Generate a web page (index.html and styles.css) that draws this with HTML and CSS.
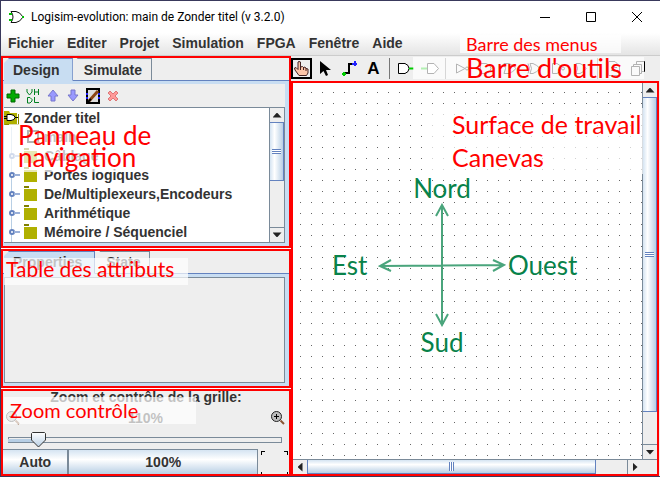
FILE: index.html
```html
<!DOCTYPE html>
<html lang="fr">
<head>
<meta charset="utf-8">
<meta name="viewport" content="width=device-width, initial-scale=1">
<title>Logisim-evolution: main de Zonder titel (v 3.2.0)</title>
<link rel="stylesheet" href="styles.css">
</head>
<body>
<div class="window">
  <header class="titlebar">
    <svg class="app-icon" width="16" height="14" viewBox="0 0 16 14"><path d="M2 1.500H7Q11 2 14 7Q11 12 7 12.500H2Q6 7 2 1.500Z" fill="#fff" stroke="#111"/><path d="M0 4h3M0 10h3M13 7h2" stroke="#0b0" stroke-width="2"/></svg>
    <h1 class="title">Logisim-evolution: main de Zonder titel (v 3.2.0)</h1>
    <div class="window-buttons">
      <button aria-label="Réduire"><svg width="12" height="12" viewBox="0 0 12 12"><path d="M1 6.500H11" stroke="#000"/></svg></button>
      <button aria-label="Agrandir"><svg width="12" height="12" viewBox="0 0 12 12"><path d="M1.500 1.500H10.500V10.500H1.500Z" stroke="#000" fill="none"/></svg></button>
      <button aria-label="Fermer"><svg width="12" height="12" viewBox="0 0 12 12"><path d="M1 1L11 11M11 1L1 11" stroke="#000"/></svg></button>
    </div>
  </header>
  <nav class="menubar">
    <button>Fichier</button><button>Editer</button><button>Projet</button><button>Simulation</button><button>FPGA</button><button>Fenêtre</button><button>Aide</button>
    <span class="note note-menus">Barre des menus</span>
  </nav>
  <main class="workspace">
    <div class="side">
      <section class="frame explorer">
        <div class="tabs"><button class="tab active">Design</button><button class="tab">Simulate</button></div>
        <div class="tab-body">
          <div class="tree-tools">
            <button aria-label="Ajouter"><svg width="14" height="14" viewBox="0 0 14 14"><path d="M5 1h4v4h4v4H9v4H5V9H1V5h4Z" fill="#0a0" stroke="#060"/></svg></button>
            <button aria-label="VHDL"><svg width="14" height="16" viewBox="0 0 14 16"><path d="M1 1V4L3.500 7L6 4V1M8.500 1V7M12.500 1V7M8.500 4H12.500M1.500 9.500H4L6 11.500V13L4 15H1.500ZM8.500 9V14.500H13" fill="none" stroke="#008020"/></svg></button>
            <button aria-label="Monter"><svg width="12" height="14" viewBox="0 0 12 14"><path d="M6 1L11 7H8V12H4V7H1Z" fill="#99f" stroke="#77c"/></svg></button>
            <button aria-label="Descendre"><svg width="12" height="14" viewBox="0 0 12 14"><path d="M6 12L11 6H8V1H4V6H1Z" fill="#99f" stroke="#77c"/></svg></button>
            <button aria-label="Apparence"><svg width="14" height="16" viewBox="0 0 14 16"><path d="M1 1H13V15H1Z" fill="#ddd" stroke="#000" stroke-width="2"/><path d="M3 13L12 3" stroke="#8b4513" stroke-width="3"/><path d="M2 14L5 11" stroke="#000" stroke-width="2"/><path d="M1 5v2M1 9v2M13 5v2M13 9v2" stroke="#22f" stroke-width="2"/></svg></button>
            <button aria-label="Supprimer"><svg width="12" height="12" viewBox="0 0 12 12"><path d="M3 1L6 4L9 1L11 3L8 6L11 9L9 11L6 8L3 11L1 9L4 6L1 3Z" fill="#f99" stroke="#d77"/></svg></button>
          </div>
          <div class="tree-pane">
            <ul class="tree">
              <li class="root"><svg width="18" height="16" viewBox="0 0 18 16"><path d="M0 1H5L6 3H13V15H0Z" fill="#b0b000"/><path d="M14.500 4V14M1 14.500H15" stroke="#880"/><path d="M3 4.500H7Q11 5 11 7.500Q11 10 7 10.500H3Z" fill="#fff" stroke="#000"/><path d="M0 6.500H3M0 8.500H3M11 7.500H14" stroke="#000"/></svg>Zonder titel</li>
              <li class="leaf"><svg width="16" height="16" viewBox="0 0 16 16"><path d="M2 2H12V13H2Z" fill="#fff" stroke="#000" stroke-width="2"/><path d="M9 11L15 15" stroke="#853" stroke-width="2"/></svg>main</li>
              <li><i class="knob"></i><i class="folder"></i>Câblage</li>
              <li><i class="knob"></i><i class="folder"></i>Portes logiques</li>
              <li><i class="knob"></i><i class="folder"></i>De/Multiplexeurs,Encodeurs</li>
              <li><i class="knob"></i><i class="folder"></i>Arithmétique</li>
              <li><i class="knob"></i><i class="folder"></i>Mémoire / Séquenciel</li>
              <li><i class="folder"></i></li>
            </ul>
            <div class="scroll vertical tree-scroll">
              <button aria-label="Haut"><i class="arrow up"></i></button>
              <div class="thumb"><i class="grip"></i></div>
              <div class="track"></div>
              <button aria-label="Bas"><i class="arrow down"></i></button>
            </div>
          </div>
        </div>
        <span class="note note-explorer">Panneau de<br>navigation</span>
      </section>
      <section class="frame attributes">
        <div class="tabs"><button class="tab active">Properties</button><button class="tab">State</button></div>
        <div class="tab-body"><div class="attribute-table"></div></div>
        <span class="note note-attributes">Table des attributs</span>
      </section>
      <section class="frame zoom">
        <label class="zoom-title" for="zoom">Zoom et contrôle de la grille:</label>
        <div class="zoom-row">
          <svg width="16" height="16" viewBox="0 0 16 16"><circle cx="6.500" cy="6.500" r="5" fill="#bbb" stroke="#222"/><path d="M4 6.500H9" stroke="#000"/><path d="M10.500 10.500L14 14" stroke="#853" stroke-width="2"/></svg>
          <output>110%</output>
          <svg width="16" height="16" viewBox="0 0 16 16"><circle cx="6.500" cy="6.500" r="5" fill="#bbb" stroke="#222"/><path d="M4 6.500H9M6.500 4V9" stroke="#000"/><path d="M10.500 10.500L14 14" stroke="#853" stroke-width="2"/></svg>
        </div>
        <input class="slider" id="zoom" type="range" min="0" max="100" value="9">
        <div class="zoom-buttons">
          <button class="metal auto">Auto</button><button class="metal full">100%</button>
          <button class="grid-toggle" aria-label="Grille"><i></i><i></i></button>
        </div>
        <span class="note note-zoom">Zoom contrôle</span>
      </section>
    </div>
    <div class="editor">
      <div class="toolbar">
        <button class="selected" aria-label="Pousser"><svg width="17" height="17" viewBox="0 0 17 17"><path d="M6 15.500L2 10L1.500 8L3 7.500L5 9.500V2L6 1.500L7.500 2V7L9.500 6.500L10.500 7.500L12 7L13 8.500L15 9V13L13.500 15.500Z" fill="#fcc5a8" stroke="#422"/><path d="M7.500 7V10M10.500 7V10M13 8V11" stroke="#422"/></svg></button>
        <button aria-label="Sélection"><svg width="13" height="17" viewBox="0 0 13 17"><path d="M1 1V14L4.500 11L7 16L9 15L7 10H12Z" fill="#000"/></svg></button>
        <button aria-label="Câble"><svg width="17" height="17" viewBox="0 0 17 17"><path d="M3 13H8V4H13" fill="none" stroke="#000" stroke-width="2"/><path d="M1 14H5M3 12V16" stroke="#0c0" stroke-width="2"/><path d="M11 4H16M14 1V6" stroke="#22f" stroke-width="2"/></svg></button>
        <button class="letter">A</button>
        <i class="rule"></i>
        <button aria-label="Entrée"><svg width="18" height="13" viewBox="0 0 18 13"><path d="M1.500 1.500H8Q12 3 12 6.500Q12 10 8 11.500H1.500Z" fill="#fff" stroke="#000"/><path d="M12 6.500H17" stroke="#0c0" stroke-width="2"/></svg></button>
        <button aria-label="Sortie"><svg width="20" height="13" viewBox="0 0 20 13"><path d="M7.500 1.500H14L18.500 6.500L14 11.500H7.500Z" fill="#fff" stroke="#000"/><path d="M1 6.500H7" stroke="#0c0" stroke-width="2"/></svg></button>
        <i class="rule"></i>
        <button aria-label="Non"><svg width="14" height="13" viewBox="0 0 14 13"><path d="M1.500 2V11L10 6.500Z" fill="none" stroke="#000"/><circle cx="12" cy="6.500" r="1.500" fill="none" stroke="#000"/></svg></button>
        <button aria-label="Et"><svg width="14" height="13" viewBox="0 0 14 13"><path d="M1.500 1.500H7Q12 3 12 6.500Q12 10 7 11.500H1.500Z" fill="none" stroke="#000"/></svg></button>
        <button aria-label="Ou"><svg width="14" height="13" viewBox="0 0 14 13"><path d="M1 1.500H6Q10 3 13 6.500Q10 10 6 11.500H1Q4 6.500 1 1.500Z" fill="none" stroke="#000"/></svg></button>
        <button aria-label="Ou exclusif"><svg width="14" height="13" viewBox="0 0 14 13"><path d="M3 1.500H6Q10 3 13 6.500Q10 10 6 11.500H3Q6 6.500 3 1.500ZM1 1.500Q4 6.500 1 11.500" fill="none" stroke="#000"/></svg></button>
        <button aria-label="Non-et"><svg width="14" height="13" viewBox="0 0 14 13"><path d="M1.500 1.500H6Q10 3 10 6.500Q10 10 6 11.500H1.500Z" fill="none" stroke="#000"/><circle cx="12" cy="6.500" r="1.500" fill="none" stroke="#000"/></svg></button>
        <button aria-label="Non-ou"><svg width="14" height="13" viewBox="0 0 14 13"><path d="M1 1.500H5Q9 3 11 6.500Q9 10 5 11.500H1Q4 6.500 1 1.500Z" fill="none" stroke="#000"/></svg></button>
        <i class="rule"></i>
        <button aria-label="Registre"><svg width="14" height="17" viewBox="0 0 14 17"><path d="M1.500 1.500H8L12.500 6V15.500H1.500ZM4 7.500H10M4 10.500H10" fill="none" stroke="#000"/></svg></button>
        <button aria-label="Copies"><svg width="16" height="17" viewBox="0 0 16 17"><path d="M1.500 6.500H9.500V15.500H1.500ZM3.500 6V4.500H11.500V13.500H10M6.500 4V1.500H14.500V11.500H12" fill="none" stroke="#000"/></svg></button>
        <span class="note note-toolbar">Barre d'outils</span>
      </div>
      <section class="frame canvas-frame">
        <div class="canvas">
          <div class="compass">
            <span class="north">Nord</span><span class="west">Est</span>
            <svg width="128" height="124" viewBox="0 0 128 124" fill="none" stroke="#4aa57c" stroke-width="2"><path d="M64 2V122M2 63L126 62M58 13L64 2L70 13M58 111L64 122L70 111M13 57L2 63L13 68M115 57L126 62L115 68"/></svg>
            <span class="east">Ouest</span><span class="south">Sud</span>
          </div>
        </div>
        <div class="scroll vertical canvas-y">
          <button aria-label="Haut"><i class="arrow up"></i></button>
          <div class="thumb"><i class="grip"></i></div>
          <div class="track"></div>
          <button aria-label="Bas"><i class="arrow down"></i></button>
        </div>
        <div class="scroll horizontal canvas-x">
          <button aria-label="Gauche"><i class="arrow left"></i></button>
          <div class="thumb"><i class="grip"></i></div>
          <div class="track"></div>
          <button aria-label="Droite"><i class="arrow right"></i></button>
        </div>
        <div class="corner"></div>
        <span class="note note-canvas">Surface de travail<br>Canevas</span>
      </section>
    </div>
  </main>
</div>
</body>
</html>
```
FILE: styles.css
```css
* { box-sizing: border-box; }
body { margin: 0; background: #2b2b4a; font: bold 14px/18px "Liberation Sans", Arial, sans-serif; color: #333; }
button { margin: 0; padding: 0; border: 0; background: none; font: inherit; color: inherit; display: flex; align-items: center; justify-content: center; }
svg { display: block; flex: none; }
i { display: block; flex: none; }

.window { display: flex; flex-direction: column; height: 100vh; border: solid #39395c; border-width: 1px 0 1px 1px; background: #eee; }
.titlebar { display: flex; align-items: center; flex: none; height: 32px; padding-left: 8px; background: #fff; }
.title { margin: 0 auto 0 6px; font: 12px/16px Roboto, "Open Sans", sans-serif; color: #000; }
.window-buttons { display: flex; }
.window-buttons button { width: 46px; height: 28px; }
.menubar { position: relative; display: flex; align-items: center; gap: 13px; flex: none; height: 23px; padding: 0 7px 3px; background: linear-gradient(#fff, #e4e4e4); border-bottom: 1px solid #ccc; }
.workspace { display: flex; flex: 1; min-height: 0; }
.side { display: flex; flex-direction: column; flex: none; gap: 1px; width: 290px; background: #fff; }
.frame { position: relative; border: 2px solid #f00; }

.tabs { display: flex; position: relative; flex: none; height: 23px; padding-left: 1px; border-bottom: 1px solid #6382bf; }
.tab { height: 23px; padding: 0 9px; border: solid #7a8a99; border-width: 1px 1px 0 0; background: #eee; clip-path: polygon(5px 0, 100% 0, 100% 100%, 0 100%, 0 5px); border-bottom: 1px solid #6382bf; }
.tab.active { padding-right: 12px; background: #c8ddf2; border-color: #6382bf; border-bottom-color: #c8ddf2; }
.tab + .tab { padding-left: 11px; }
.tab-body { display: flex; flex-direction: column; flex: 1; min-height: 0; padding: 3px 4px 3px 1px; background: #c8ddf2; }
.explorer, .attributes { display: flex; flex-direction: column; min-height: 0; background: #eee; }
.explorer { flex: 192; }
.attributes { flex: 138; }
.tree-tools { display: flex; align-items: center; gap: 6px; flex: none; height: 23px; padding-left: 2px; background: #eee; }
.tree-tools button { width: 14px; height: 18px; }
.tree-pane { display: flex; flex: 1; min-height: 0; border: solid #7a8a99; border-width: 1px 0; background: #fff; }
.tree { flex: 1; overflow: hidden; margin: 0; padding: 0; list-style: none; background: linear-gradient(#b8cfe5, #b8cfe5) 7px 19px / 1px 100% no-repeat; }
.tree li { display: flex; align-items: center; height: 19px; padding-left: 20px; gap: 7px; position: relative; white-space: nowrap; }
.tree .root { padding-left: 0; gap: 2px; }
.tree .leaf { padding-left: 22px; gap: 2px; }
.knob { position: absolute; left: 5px; width: 6px; height: 6px; border: 2px solid #6382bf; border-radius: 50%; background: #fff; }
.knob::after { content: ""; position: absolute; left: 3px; top: 0; width: 6px; height: 2px; background: #9ab0d8; }
.folder { width: 13px; height: 15px; background: linear-gradient(#808000, #808000) 0 0 / 5px 2px no-repeat, linear-gradient(#b0b000, #b0b000) 0 3px / 13px 12px no-repeat; }

.scroll { display: flex; background: #eee; }
.scroll button { flex: none; background: #eee; }
.vertical { flex-direction: column; border-left: 1px solid #7a8a99; }
.horizontal { border-top: 1px solid #7a8a99; }
.vertical button { height: 14px; }
.horizontal button { width: 14px; }
.thumb { display: flex; align-items: center; justify-content: center; border: 1px solid #6382bf; }
.vertical .thumb { background: linear-gradient(90deg, #d5e4f2, #fff 35%, #b8cfe5); border-left: 0; }
.horizontal .thumb { background: linear-gradient(#d5e4f2, #fff 35%, #b8cfe5); border-top: 0; }
.vertical .track { border-bottom: 1px solid #7a8a99; }
.horizontal .track { border-right: 1px solid #7a8a99; }
.vertical .grip { width: 9px; height: 5px; background: repeating-linear-gradient(#6382bf 0 1px, #fff 1px 2px); }
.horizontal .grip { width: 5px; height: 9px; background: repeating-linear-gradient(90deg, #6382bf 0 1px, #fff 1px 2px); }
.tree-scroll { width: 16px; border-right: 1px solid #7a8a99; }
.tree-scroll .thumb { flex: 60; }
.tree-scroll .track { flex: 48; }
.arrow { width: 9px; height: 5px; background: #222; }
.arrow.up { clip-path: polygon(50% 0, 100% 100%, 0 100%); }
.arrow.down { clip-path: polygon(0 0, 100% 0, 50% 100%); }
.arrow.left, .arrow.right { width: 5px; height: 9px; }
.arrow.left { clip-path: polygon(100% 0, 100% 100%, 0 50%); }
.arrow.right { clip-path: polygon(0 0, 100% 50%, 0 100%); }

.attribute-table { flex: 1; border: 1px solid #7a8a99; background: #eee; }

.zoom { flex: none; background: #eee; }
.zoom-title { display: block; height: 13px; line-height: 12px; text-align: center; }
.zoom-row { display: flex; align-items: center; justify-content: space-between; height: 28px; padding: 0 3px 0 2px; }
.slider { display: block; appearance: none; width: calc(100% - 12px); height: 16px; margin: 0 0 1px 5px; background: linear-gradient(#7a8a99, #7a8a99) 0 5px / 100% 1px no-repeat, linear-gradient(#7a8a99, #7a8a99) 0 10px / 100% 1px no-repeat, linear-gradient(#b8cfe5, #b8cfe5) 0 7px / 24px 3px no-repeat, linear-gradient(#7a8a99, #7a8a99) 0 5px / 1px 6px no-repeat, linear-gradient(#7a8a99, #7a8a99) 100% 5px / 1px 6px no-repeat; }
.slider::-webkit-slider-thumb { appearance: none; width: 15px; height: 16px; background: url("data:image/svg+xml,%3Csvg xmlns='http://www.w3.org/2000/svg' width='15' height='16'%3E%3ClinearGradient id='g' x2='0' y2='1'%3E%3Cstop stop-color='%23fff'/%3E%3Cstop offset='1' stop-color='%23b8cfe5'/%3E%3C/linearGradient%3E%3Cpath d='M.5 1.500L1.500.5H13.500L14.500 1.500V8L7.500 15L.5 8Z' fill='url(%23g)' stroke='%23333'/%3E%3C/svg%3E"); }
.zoom-buttons { display: flex; height: 25px; }
.metal { border: solid #7a8a99; border-width: 1px 1px 0 0; background: linear-gradient(#d5e4f2, #fff 40%, #b8cfe5); }
.auto { flex: 65; border-right-width: 2px; }
.full { flex: 189; }
.grid-toggle { flex: 0 0 31px; align-items: stretch; justify-content: space-between; padding: 2px 1px 0 3px; }
.grid-toggle i { width: 4px; background: linear-gradient(#000, #000) 0 0 / 4px 1px no-repeat, linear-gradient(#000, #000) 0 0 / 1px 4px no-repeat, linear-gradient(#000, #000) 0 100% / 1px 2px no-repeat; }
.grid-toggle i + i { background-position: 0 0, 100% 0, 100% 100%; }

.editor { display: flex; flex-direction: column; flex: 1; min-width: 0; }
.toolbar { position: relative; display: flex; align-items: center; gap: 3px; flex: none; height: 25px; }
.toolbar button { flex: none; width: 21px; height: 21px; }
.toolbar .selected { border: 2px solid #000; }
.toolbar .letter { font-size: 17px; color: #000; }
.rule { width: 1px; height: 21px; margin: 0 2px; background: #777; }
.canvas-frame { display: grid; flex: 1; min-height: 0; margin-right: 1px; grid-template: 1fr 15px / 1fr 15px; }
.canvas { position: relative; background: linear-gradient(#fff 0 10px, transparent 10px) 8px 10px / 11px 11px, linear-gradient(90deg, #fff 0 10px, #666 10px) 8px 10px / 11px 11px; }
.canvas-y .thumb { flex: 315; }
.canvas-y .track { flex: 32; }
.canvas-x .thumb { flex: 291; }
.canvas-x .track { flex: 31; }
.corner { border-top: 1px solid #7a8a99; }

.compass { position: absolute; left: 39px; top: 90px; display: grid; grid-template-columns: 44px 132px 76px; grid-template-rows: 30px 124px 30px; align-items: center; justify-items: center; font: 26px/30px Lato, sans-serif; color: #08824a; }
.north, .south { grid-column: 2; }
.north { grid-row: 1; }
.west { grid-area: 2 / 1; justify-self: start; }
.compass svg { grid-area: 2 / 2; }
.east { grid-area: 2 / 3; justify-self: start; }
.south { grid-row: 3; }

.note { position: absolute; z-index: 2; white-space: nowrap; color: #f00; background: rgba(255, 255, 255, .7); font: 21px/22px Lato, sans-serif; }
.note-menus { left: 459px; top: 2px; padding: 0 24px 0 6px; font-size: 18px; line-height: 18px; }
.note-toolbar { left: 122px; top: 1px; padding: 0 22px 0 53px; font-size: 27px; }
.note-explorer { left: 6px; top: 66px; padding: 0 2px 4px 9px; font-size: 26px; }
.note-attributes { left: 1px; top: 7px; padding: 0 14px 5px 2px; }
.note-zoom { left: 1px; top: 6px; padding: 2px 58px 3px 6px; font-size: 20px; }
.note-canvas { left: 130px; top: 25px; padding: 0 2px 0 29px; font-size: 25px; line-height: 33px; }
```
